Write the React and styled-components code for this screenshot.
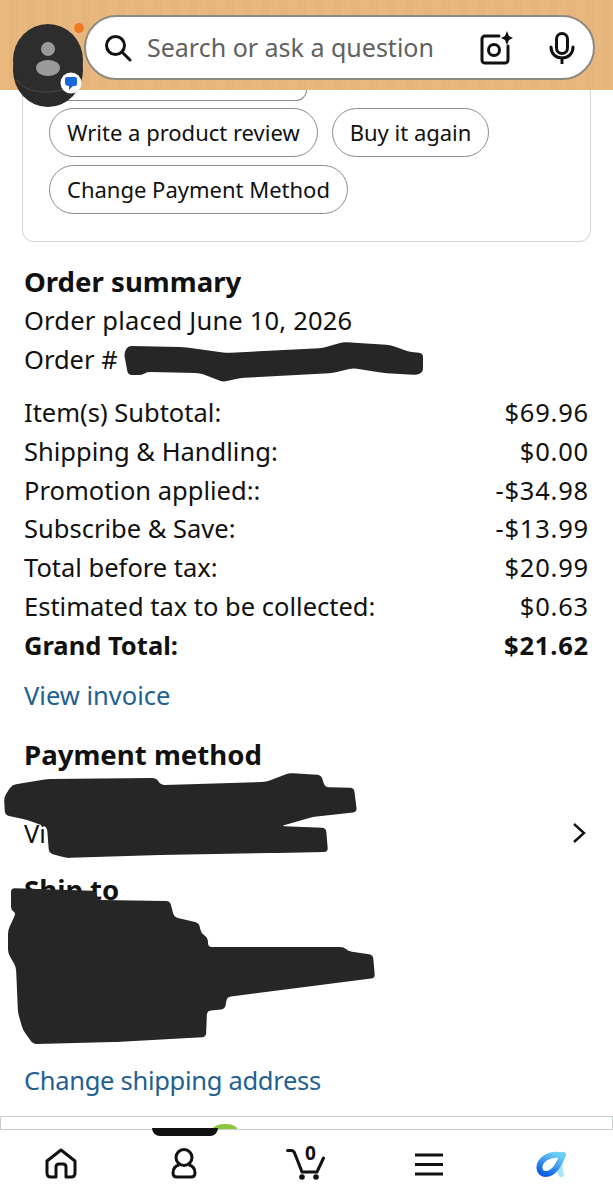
import styled, { createGlobalStyle } from "styled-components";

const GlobalStyle = createGlobalStyle`
  html, body {
    margin: 0;
    padding: 0;
    background: #fff;
  }
  * {
    box-sizing: border-box;
  }
`

const Page = styled.div`
  position: relative;
  width: 613px;
  height: 1200px;
  overflow: hidden;
  display: flex;
  flex-direction: column;
  background: #fff;
  color: #111;
  font-family: "Noto Sans", "Open Sans", sans-serif;
  font-size: 25.5px;
`
const Header = styled.header`
  height: 90px;
  flex-shrink: 0;
  padding: 15px 18px 0 84px;
  background: repeating-linear-gradient(90deg, #e8b87f 0, #e8b87f 9px, #e6b57c 9px, #e6b57c 18px);
`
const SearchBar = styled.div`
  height: 65px;
  display: flex;
  align-items: center;
  padding: 0 18px;
  background: #fff;
  border: 2px solid #8d8a82;
  border-radius: 33px;
`
const Placeholder = styled.span`
  flex: 1;
  margin: 0 0 2px 15px;
  font-size: 25px;
  color: #616161;
`
const SearchIcons = styled.div`
  display: flex;
  align-items: center;
  gap: 36px;
`
const Avatar = styled.div`
  position: absolute;
  top: 24px;
  left: 13px;
  width: 70px;
  height: 83px;
`
const AvatarArt = styled.svg`
  overflow: visible;
`
const Card = styled.section`
  margin: 0 22px;
  padding: 0 26px 27px;
  height: 152px;
  border: 1px solid #d6d6d6;
  border-top: none;
  border-radius: 0 0 12px 12px;
`
const CutChip = styled.div`
  width: 258px;
  height: 11px;
  margin-bottom: 7px;
  border: 1px solid #8c8c8c;
  border-top: none;
  border-radius: 0 0 24px 24px;
`
const ChipRow = styled.div`
  display: flex;
  gap: 14px;
  margin-bottom: 8px;
`
const Chip = styled.div`
  height: 49px;
  padding: 0 17px 2px;
  display: flex;
  align-items: center;
  white-space: nowrap;
  font-size: 22px;
  border: 1px solid #8c8c8c;
  border-radius: 25px;
`
const Content = styled.main`
  flex: 1;
  padding: 20px 24px 0;
`
const Heading = styled.h2`
  margin: ${(props) => props.$top || 0}px 0 0;
  font-size: 27.6px;
  line-height: 38px;
  font-weight: 700;
`
const OrderLines = styled.div`
  margin-top: 1px;
`
const Line = styled.div`
  line-height: 39px;
  letter-spacing: ${(props) => props.$spacing || 0}px;
`
const Totals = styled.div`
  margin-top: 14px;
`
const TotalRow = styled.div`
  display: flex;
  justify-content: space-between;
  line-height: 38.8px;
  font-weight: ${(props) => (props.$bold ? 700 : 400)};
`
const Amount = styled.span`
  letter-spacing: 0.8px;
`
const BlueLink = styled.a`
  display: block;
  margin-top: ${(props) => props.$top}px;
  color: #22608f;
  line-height: 39px;
  letter-spacing: ${(props) => props.$spacing || 0}px;
`
const MethodRow = styled.div`
  display: flex;
  justify-content: space-between;
  align-items: center;
  height: 39px;
  margin-top: 41px;
  padding-right: 3px;
`
const StripAd = styled.div`
  position: relative;
  height: 14px;
  flex-shrink: 0;
  border: 1px solid #c9cfcf;
  background: #fff;
`
const Notch = styled.div`
  position: absolute;
  left: 151px;
  top: 11px;
  width: 66px;
  height: 8px;
  background: #111;
  border-radius: 0 0 8px 8px;
`
const GreenArc = styled.div`
  position: absolute;
  left: 212px;
  top: 7px;
  width: 24px;
  height: 5px;
  background: #8cc63f;
  border-radius: 50% 50% 0 0 / 100% 100% 0 0;
`
const NavBar = styled.nav`
  height: 70px;
  flex-shrink: 0;
  display: grid;
  grid-template-columns: repeat(5, 1fr);
  justify-items: center;
  align-items: start;
  background: #fff;
`
const NavItem = styled.div`
  position: relative;
  display: flex;
  padding-top: ${(props) => props.$top}px;
`
const CartCount = styled.span`
  position: absolute;
  top: 13px;
  left: 17px;
  width: 14px;
  text-align: center;
  font-size: 19px;
  line-height: 20px;
  font-weight: 700;
`
const Scribbles = styled.svg`
  position: absolute;
  top: 0;
  left: 0;
  pointer-events: none;
`

const orderScribble = [[124,353],[128,346],[183,347],[227,353],[323,348],[343,342],[390,345],[410,352],[423,353],[423,372],[417,375],[383,373],[353,368],[333,373],[240,378],[223,382],[200,373],[147,372],[142,375],[128,375]]
const paymentScribble = [[4,797],[12,785],[47,779],[156,778],[161,785],[266,782],[289,773],[321,775],[325,787],[354,788],[357,812],[313,817],[281,826],[326,828],[328,852],[274,853],[156,855],[66,858],[49,853],[47,827],[27,820],[5,815]]
const shipScribble = [[11,888],[96,891],[98,900],[170,901],[174,917],[199,923],[201,933],[208,938],[208,947],[344,947],[348,951],[373,955],[375,978],[227,997],[225,1009],[207,1011],[206,1037],[117,1042],[33,1044],[23,1030],[18,1013],[16,967],[8,953],[8,930],[16,913],[11,910]]

// marker strokes have soft corners, so cut each corner with a small curve
function markerPath(points, radius = 4) {
  const n = points.length
  let d = ""
  points.forEach((p, i) => {
    const prev = points[(i - 1 + n) % n]
    const next = points[(i + 1) % n]
    const toward = (q) => {
      const dist = Math.hypot(q[0] - p[0], q[1] - p[1])
      const t = Math.min(radius, dist / 2) / dist
      return [p[0] + (q[0] - p[0]) * t, p[1] + (q[1] - p[1]) * t]
    }
    const a = toward(prev)
    const b = toward(next)
    d += `${i === 0 ? "M" : "L"}${a[0]} ${a[1]} Q${p[0]} ${p[1]} ${b[0]} ${b[1]} `
  })
  return d + "Z"
}

const totals = [
  ["Item(s) Subtotal:", "$69.96"],
  ["Shipping & Handling:", "$0.00"],
  ["Promotion applied::", "-$34.98"],
  ["Subscribe & Save:", "-$13.99"],
  ["Total before tax:", "$20.99"],
  ["Estimated tax to be collected:", "$0.63"],
]

function App() {
  return (
    <Page>
      <GlobalStyle />
      <Header>
        <SearchBar>
          <svg width="28" height="28" viewBox="0 0 28 28" fill="none" stroke="#111" strokeWidth="3" strokeLinecap="round">
            <circle cx="11.5" cy="11.5" r="9" />
            <path d="M18 18 L26 26" />
          </svg>
          <Placeholder>Search or ask a question</Placeholder>
          <SearchIcons>
            <svg width="34" height="34" viewBox="0 0 34 34" fill="none" stroke="#111" strokeWidth="3">
              <path d="M20 5 H6 a3 3 0 0 0 -3 3 V29 a3 3 0 0 0 3 3 H26 a3 3 0 0 0 3 -3 V15" strokeLinecap="round" />
              <circle cx="15" cy="19" r="5.5" />
              <path d="M28 0 L30 5 L34 7 L30 9 L28 14 L26 9 L22 7 L26 5 Z" fill="#111" stroke="none" />
            </svg>
            <svg width="26" height="32" viewBox="0 0 26 32" fill="none" stroke="#111" strokeWidth="3" strokeLinecap="round">
              <rect x="7.5" y="1.5" width="11" height="20" rx="5.5" />
              <path d="M2 15 C2 22 7 26 13 26 C19 26 24 22 24 15" />
              <path d="M13 26 V31" />
            </svg>
          </SearchIcons>
        </SearchBar>
      </Header>
      <Avatar>
        <AvatarArt width="78" height="83" viewBox="0 0 78 83">
          <ellipse cx="35" cy="46" rx="35" ry="37" fill="#2b2b2b" />
          <ellipse cx="35" cy="36" rx="35" ry="36" fill="#2d2d2d" />
          <path d="M4 56 C14 72 50 72 66 56" fill="none" stroke="#4a4a4a" strokeWidth="1" />
          <circle cx="35" cy="25" r="7" fill="#9a9a9a" />
          <ellipse cx="35" cy="44" rx="12" ry="8" fill="#9a9a9a" />
          <circle cx="66" cy="4" r="5" fill="#ef7a22" />
          <circle cx="58" cy="59" r="10.5" fill="#fff" />
          <path d="M52 55 Q52 53 54 53 H62 Q64 53 64 55 V60 Q64 62 62 62 H60 L56 66 L56 62 Q52 62 52 59 Z" fill="#1a66d8" />
        </AvatarArt>
      </Avatar>
      <Card>
        <CutChip />
        <ChipRow>
          <Chip>Write a product review</Chip>
          <Chip>Buy it again</Chip>
        </ChipRow>
        <ChipRow>
          <Chip>Change Payment Method</Chip>
        </ChipRow>
      </Card>
      <Content>
        <Heading>Order summary</Heading>
        <OrderLines>
          <Line $spacing={0.2}>Order placed June 10, 2026</Line>
          <Line>Order #</Line>
        </OrderLines>
        <Totals>
          {totals.map(([label, value]) => (
            <TotalRow key={label}>
              <span>{label}</span>
              <Amount>{value}</Amount>
            </TotalRow>
          ))}
          <TotalRow $bold>
            <span>Grand Total:</span>
            <Amount>$21.62</Amount>
          </TotalRow>
        </Totals>
        <BlueLink $top={11}>View invoice</BlueLink>
        <Heading $top={20}>Payment method</Heading>
        <MethodRow>
          <span>Vi</span>
          <svg width="14" height="22" viewBox="0 0 14 22" fill="none" stroke="#111" strokeWidth="2.4">
            <path d="M2 2 L12 11 L2 20" />
          </svg>
        </MethodRow>
        <Heading $top={17}>Ship to</Heading>
        <BlueLink $top={153} $spacing={-0.3}>Change shipping address</BlueLink>
      </Content>
      <StripAd>
        <GreenArc />
        <Notch />
      </StripAd>
      <NavBar>
        <NavItem $top={18}>
          <svg width="32" height="31" viewBox="0 0 32 31" fill="none" stroke="#111" strokeWidth="3" strokeLinejoin="round">
            <path d="M16 2 L30 13 V25 Q30 29 26 29 H21 V19 Q21 16 18 16 H14 Q11 16 11 19 V29 H6 Q2 29 2 25 V13 Z" />
          </svg>
        </NavItem>
        <NavItem $top={18}>
          <svg width="26" height="31" viewBox="0 0 26 31" fill="none" stroke="#111" strokeWidth="3">
            <circle cx="13" cy="9.5" r="8" />
            <path d="M8 17 C4 18 2 21 2 25 Q2 29 6 29 H20 Q24 29 24 25 C24 21 22 18 18 17" />
          </svg>
        </NavItem>
        <NavItem $top={17}>
          <svg width="40" height="34" viewBox="0 0 40 34" fill="none" stroke="#111" strokeWidth="3" strokeLinecap="round">
            <path d="M1.5 3.5 H5 Q8 3.5 9 7 L16 25 H31 L37.5 11" />
            <circle cx="16" cy="30" r="2.8" fill="#111" stroke="none" />
            <circle cx="30" cy="30" r="2.8" fill="#111" stroke="none" />
          </svg>
          <CartCount>0</CartCount>
        </NavItem>
        <NavItem $top={23}>
          <svg width="30" height="23" viewBox="0 0 30 23" stroke="#111" strokeWidth="3">
            <path d="M1 2 H29 M1 11.5 H29 M1 21 H29" />
          </svg>
        </NavItem>
        <NavItem $top={21}>
          <svg width="32" height="27" viewBox="0 0 32 27" fill="none" strokeWidth="6" strokeLinecap="round">
            <defs>
              <linearGradient id="logoRing" x1="0.8" y1="0" x2="0.2" y2="1">
                <stop offset="0" stopColor="#6fd0f7" />
                <stop offset="1" stopColor="#0f5fe0" />
              </linearGradient>
            </defs>
            <path d="M25 23 C22 17 24 9 27 4" stroke="#a8e4f8" />
            <path d="M24 4 C12 2 3 10 3.5 17 C4 25 14 25 20 17 C23 13 25 8 27 4" stroke="url(#logoRing)" />
          </svg>
        </NavItem>
      </NavBar>
      <Scribbles width="613" height="1200" viewBox="0 0 613 1200">
        <path d={markerPath(orderScribble)} fill="#262626" />
        <path d={markerPath(paymentScribble)} fill="#262626" />
        <path d={markerPath(shipScribble)} fill="#262626" />
      </Scribbles>
    </Page>
  )
}

export default App;
